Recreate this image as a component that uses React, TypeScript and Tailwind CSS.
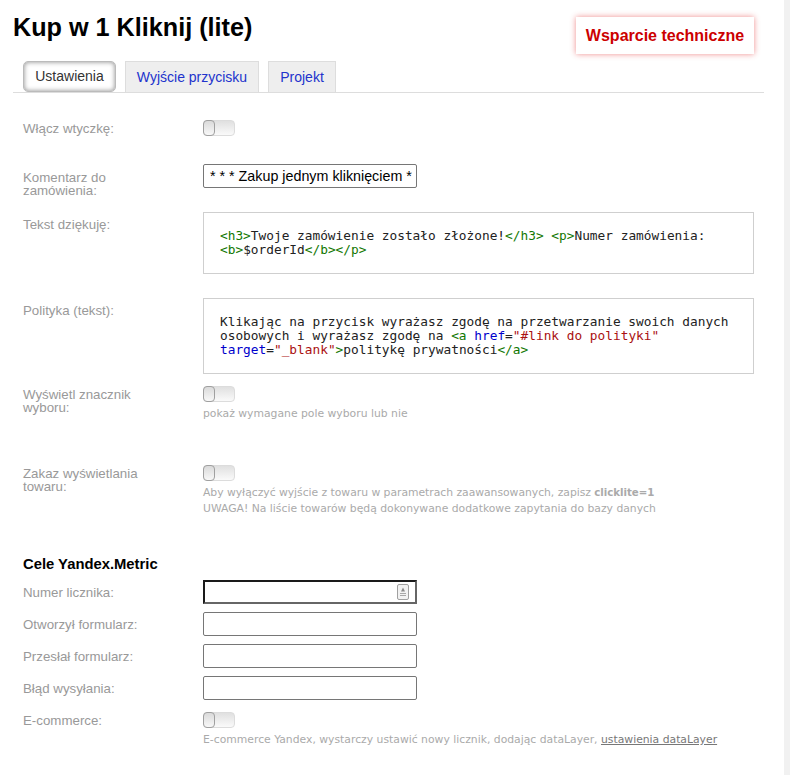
import React from 'react';

const Toggle: React.FC = () => (
  <div className="w-[32px] h-[16px] rounded-[4px] border border-[#dcdcdc] bg-gradient-to-b from-[#e0e0e0] to-[#fafafa]">
    <div className="w-[12px] h-[16px] -mt-px -ml-px border border-[#a0a0a0] rounded-[4px] bg-gradient-to-b from-[#dadada] to-[#f8f8f8]" />
  </div>
);

const Label: React.FC<{ children: React.ReactNode; className?: string }> = ({ children, className }) => (
  <div className={`w-[180px] flex-none pr-[50px] text-[13.3px] leading-[13px] text-[#999] ${className ?? ''}`}>{children}</div>
);

const Hint: React.FC<{ children: React.ReactNode; className?: string }> = ({ children, className }) => (
  <div className={`font-['DejaVu_Sans','Liberation_Sans',sans-serif] text-[10.8px] leading-[16px] text-[#aaaaaa] whitespace-nowrap ${className ?? ''}`}>{children}</div>
);

const TextInput: React.FC<{ value?: string }> = ({ value }) => (
  <div className="w-[214px] h-[24px] flex-none border border-[#767676] rounded-[2px] px-[6px] text-[14.3px] leading-[22px] text-black overflow-hidden whitespace-nowrap">
    {value}
  </div>
);

const T: React.FC<{ children: React.ReactNode }> = ({ children }) => <span className="text-[#117700]">{children}</span>;

const CodeBox: React.FC<{ children: React.ReactNode; className?: string }> = ({ children, className }) => (
  <div className={`flex-1 border border-[#cfcfcf] px-[16px] font-['DejaVu_Sans_Mono',monospace] text-[12.8px] leading-[14px] text-[#222] ${className ?? ''}`}>
    {children}
  </div>
);

const MetricRow: React.FC<{ label: string; children?: React.ReactNode; className?: string }> = ({ label, children, className }) => (
  <div className={`flex items-center ${className ?? 'mb-[8px]'}`}>
    <Label>{label}</Label>
    {children ?? <TextInput />}
  </div>
);

const App: React.FC = () => {
  return (
    <div className="flex h-[775px] overflow-hidden bg-white font-['Liberation_Sans',Arial,sans-serif]">
      <div className="flex-1 pl-[13px] pr-[20px]">
        <div className="flex items-start justify-between h-[61px]">
          <h1 className="mt-[12px] text-[25.2px] leading-[30px] font-bold text-black">Kup w 1 Kliknij (lite)</h1>
          <div className="mt-[17px] mr-[10px] w-[178px] h-[37px] flex items-center justify-center bg-white text-[16px] font-bold text-[#cc0000] shadow-[0_0_6px_rgba(220,0,0,0.45)]">
            Wsparcie techniczne
          </div>
        </div>

        <div className="flex gap-[9px] pl-[10px] h-[32px] border-b border-[#dddddd] mb-[27px]">
          <div className="w-[93px] h-[31px] flex items-center justify-center rounded-[5px] border border-[#bbbbbb] bg-white text-[14px] text-[#333] shadow-[inset_0_0_5px_rgba(0,0,0,0.45)]">
            Ustawienia
          </div>
          <div className="w-[134px] h-[31px] flex items-center justify-center border border-b-0 border-[#dddddd] bg-[#eeeeee] text-[14px] text-[#2233cc]">
            Wyjście przycisku
          </div>
          <div className="w-[68px] h-[31px] flex items-center justify-center border border-b-0 border-[#dddddd] bg-[#eeeeee] text-[14px] text-[#2233cc]">
            Projekt
          </div>
        </div>

        <div className="pl-[10px] pr-[10px]">
          <div className="flex mb-[28px]">
            <Label className="pt-[2px]">Włącz wtyczkę:</Label>
            <Toggle />
          </div>

          <div className="flex mb-[15px]">
            <Label className="pt-[7px]">Komentarz do zamówienia:</Label>
            <TextInput value="* * * Zakup jednym kliknięciem *" />
          </div>

          <div className="flex mb-[24px]">
            <Label className="pt-[6px]">Tekst dziękuję:</Label>
            <CodeBox className="h-[62px] pt-[16px]">
              <T>&lt;h3&gt;</T>Twoje zamówienie zostało złożone!<T>&lt;/h3&gt;</T> <T>&lt;p&gt;</T>Numer zamówienia:
              <br />
              <T>&lt;b&gt;</T>$orderId<T>&lt;/b&gt;</T><T>&lt;/p&gt;</T>
            </CodeBox>
          </div>

          <div className="flex mb-[12px]">
            <Label className="pt-[6px]">Polityka (tekst):</Label>
            <CodeBox className="h-[76px] pt-[16px]">
              Klikając na przycisk wyrażasz zgodę na przetwarzanie swoich danych
              <br />
              osobowych i wyrażasz zgodę na <T>&lt;a</T> <span className="text-[#0000cc]">href</span>=<span className="text-[#aa1111]">"#link do polityki"</span>
              <br />
              <span className="text-[#0000cc]">target</span>=<span className="text-[#aa1111]">"_blank"</span><T>&gt;</T>politykę prywatności<T>&lt;/a&gt;</T>
            </CodeBox>
          </div>

          <div className="flex h-[79px]">
            <Label className="pt-[2px]">Wyświetl znacznik wyboru:</Label>
            <div>
              <Toggle />
              <Hint className="mt-[4px]">pokaż wymagane pole wyboru lub nie</Hint>
            </div>
          </div>

          <div className="flex h-[91px]">
            <Label className="pt-[2px]">Zakaz wyświetlania towaru:</Label>
            <div>
              <Toggle />
              <Hint className="mt-[4px] tracking-[-0.03px]">
                Aby wyłączyć wyjście z towaru w parametrach zaawansowanych, zapisz <b className="text-[10.2px]">clicklite=1</b>
              </Hint>
              <Hint>UWAGA! Na liście towarów będą dokonywane dodatkowe zapytania do bazy danych</Hint>
            </div>
          </div>

          <div className="h-[24px] text-[14.8px] leading-[16px] font-bold text-black">Cele Yandex.Metric</div>

          <MetricRow label="Numer licznika:">
            <div className="relative w-[214px] h-[24px] flex-none border-2 border-t-[#1a1a1a] border-l-[#1a1a1a] border-r-[#666] border-b-[#666]">
              <svg className="absolute right-[6px] top-[2px]" width="12" height="16" viewBox="0 0 12 16" fill="none">
                <rect x="0.5" y="0.5" width="11" height="15" rx="1.5" fill="#f2f2f2" stroke="#a0a0a0" />
                <path d="M6 3.5 8 7.5H4Z" fill="#8a8a8a" />
                <path d="M3 9.5h6M3 11.5h6" stroke="#a8a8a8" />
              </svg>
            </div>
          </MetricRow>
          <MetricRow label="Otworzył formularz:" />
          <MetricRow label="Przesłał formularz:" />
          <MetricRow label="Błąd wysyłania:" className="mb-[12px]" />

          <div className="flex">
            <Label className="pt-[2px]">E-commerce:</Label>
            <div>
              <Toggle />
              <Hint className="mt-[4px]">
                E-commerce Yandex, wystarczy ustawić nowy licznik, dodając dataLayer, <span className="underline text-[#777]">ustawienia dataLayer</span>
              </Hint>
            </div>
          </div>
        </div>
      </div>
      <div className="w-[6px] flex-none bg-[#f1f1f1]" />
    </div>
  );
};

export default App;
